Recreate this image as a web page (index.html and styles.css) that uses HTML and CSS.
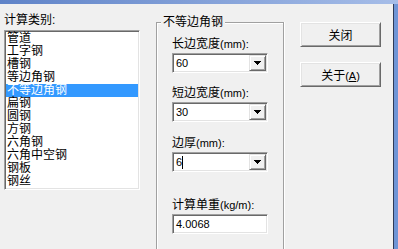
FILE: index.html
```html
<!DOCTYPE html>
<html lang="zh-CN">
<head>
  <meta charset="UTF-8">
  <title>计算</title>
  <link rel="stylesheet" href="styles.css">
</head>
<body>
  <div class="titlebar"></div>
  <div class="dialog">
    <div class="left">
      <div class="caption">计算类别:</div>
      <ul class="listbox">
        <li>管道</li>
        <li>工字钢</li>
        <li>槽钢</li>
        <li>等边角钢</li>
        <li class="selected">不等边角钢</li>
        <li>扁钢</li>
        <li>圆钢</li>
        <li>方钢</li>
        <li>六角钢</li>
        <li>六角中空钢</li>
        <li>钢板</li>
        <li>钢丝</li>
      </ul>
    </div>

    <fieldset class="group">
      <legend>不等边角钢</legend>
      <div class="fields">
        <div class="field f1">
          <label>长边宽度<span class="lat">(mm):</span></label>
          <div class="combo">
            <span class="value">60</span>
            <span class="drop"><svg width="7" height="4" viewBox="0 0 7 4"><path d="M0 0h7v1H0z M1 1h5v1H1z M2 2h3v1H2z M3 3h1v1H3z"/></svg></span>
          </div>
        </div>
        <div class="field f2">
          <label>短边宽度<span class="lat">(mm):</span></label>
          <div class="combo">
            <span class="value">30</span>
            <span class="drop"><svg width="7" height="4" viewBox="0 0 7 4"><path d="M0 0h7v1H0z M1 1h5v1H1z M2 2h3v1H2z M3 3h1v1H3z"/></svg></span>
          </div>
        </div>
        <div class="field f3">
          <label>边厚<span class="lat">(mm):</span></label>
          <div class="combo">
            <span class="value">6<span class="caret"></span></span>
            <span class="drop"><svg width="7" height="4" viewBox="0 0 7 4"><path d="M0 0h7v1H0z M1 1h5v1H1z M2 2h3v1H2z M3 3h1v1H3z"/></svg></span>
          </div>
        </div>
        <div class="field f4">
          <label>计算单重<span class="lat">(kg/m):</span></label>
          <div class="edit">4.0068</div>
        </div>
      </div>
    </fieldset>

    <div class="buttons">
      <button class="btn">关闭</button>
      <button class="btn">关于<span class="lat">(<u>A</u>)</span></button>
    </div>
  </div>
</body>
</html>
```

FILE: styles.css
```css
html, body {
  margin: 0;
  padding: 0;
}
body {
  width: 398px;
  height: 249px;
  overflow: hidden;
  background: #f0f0f0;
  font-family: "Liberation Sans", "Noto Sans CJK SC", sans-serif;
  font-size: 12px;
  color: #000;
}
.lat {
  font-size: 11px;
}
.titlebar {
  height: 4px;
  background: linear-gradient(to right, #5f83c8, #a6bde8);
}
.dialog {
  display: flex;
  align-items: flex-start;
  height: 245px;
  padding: 10px 0 0 4px;
  box-sizing: border-box;
  overflow: hidden;
  border-right: 4px solid #6f95d6;
  box-shadow: inset -1px 0 0 #2e3a56;
}
.caption {
  line-height: 13px;
  height: 13px;
  margin-bottom: 3px;
}
.listbox {
  list-style: none;
  margin: 0;
  padding: 1px;
  width: 136px;
  height: 160px;
  box-sizing: border-box;
  overflow: hidden;
  background: #fff;
  border: 1px solid;
  border-color: #a0a0a0 #fff #fff #a0a0a0;
  box-shadow: inset 1px 1px 0 #696969, inset -1px -1px 0 #e3e3e3;
}
.listbox li {
  height: 13px;
  line-height: 13px;
  padding-left: 1px;
  white-space: nowrap;
}
.listbox li.selected {
  background: #3399ff;
  color: #fff;
}
/* group box runs on past the bottom of the window */
.group {
  margin: 2px 0 0 16px;
  padding: 0 0 0 4px;
  width: 128px;
  height: 233px;
  box-sizing: border-box;
  min-width: 0;
  border: 1px solid #a0a0a0;
  border-bottom: none;
  box-shadow: inset 1px 1px 0 #fff, 1px 0 0 #fff;
}
.group legend {
  padding: 0 2px;
  line-height: 13px;
  background: #f0f0f0;
}
.fields {
  margin-left: 11px;
}
.field label {
  display: block;
  height: 13px;
  line-height: 13px;
  margin-bottom: 2px;
  white-space: nowrap;
}
.f1 { margin-top: 9px; }
.f2 { margin-top: 14px; }
.f3 { margin-top: 15px; }
.f4 { margin-top: 27px; }
.combo, .edit {
  width: 96px;
  height: 20px;
  box-sizing: border-box;
  padding: 1px;
  background: #fff;
  border: 1px solid;
  border-color: #a0a0a0 #fff #fff #a0a0a0;
  box-shadow: inset 1px 1px 0 #696969, inset -1px -1px 0 #e3e3e3;
}
.combo {
  display: flex;
}
.combo .value {
  flex: 1;
  padding-left: 2px;
  font-size: 11px;
  line-height: 16px;
}
.caret {
  display: inline-block;
  width: 1px;
  height: 13px;
  background: #000;
  vertical-align: -3px;
}
.drop {
  width: 17px;
  height: 16px;
  box-sizing: border-box;
  display: flex;
  align-items: center;
  justify-content: center;
  background: #f0f0f0;
  border: 1px solid;
  border-color: #e3e3e3 #696969 #696969 #e3e3e3;
  box-shadow: inset 1px 1px 0 #fff, inset -1px -1px 0 #a0a0a0;
}
.drop svg {
  display: block;
  shape-rendering: crispEdges;
}
.edit {
  padding-left: 3px;
  font-size: 11px;
  line-height: 16px;
}
.buttons {
  display: flex;
  flex-direction: column;
  gap: 15px;
  margin: 8px 0 0 16px;
}
.btn {
  width: 81px;
  height: 25px;
  padding: 0;
  font: inherit;
  color: #000;
  background: #f0f0f0;
  border: 1px solid;
  border-color: #fff #696969 #696969 #fff;
  box-shadow: inset 1px 1px 0 #e3e3e3, inset -1px -1px 0 #a0a0a0;
}
```
